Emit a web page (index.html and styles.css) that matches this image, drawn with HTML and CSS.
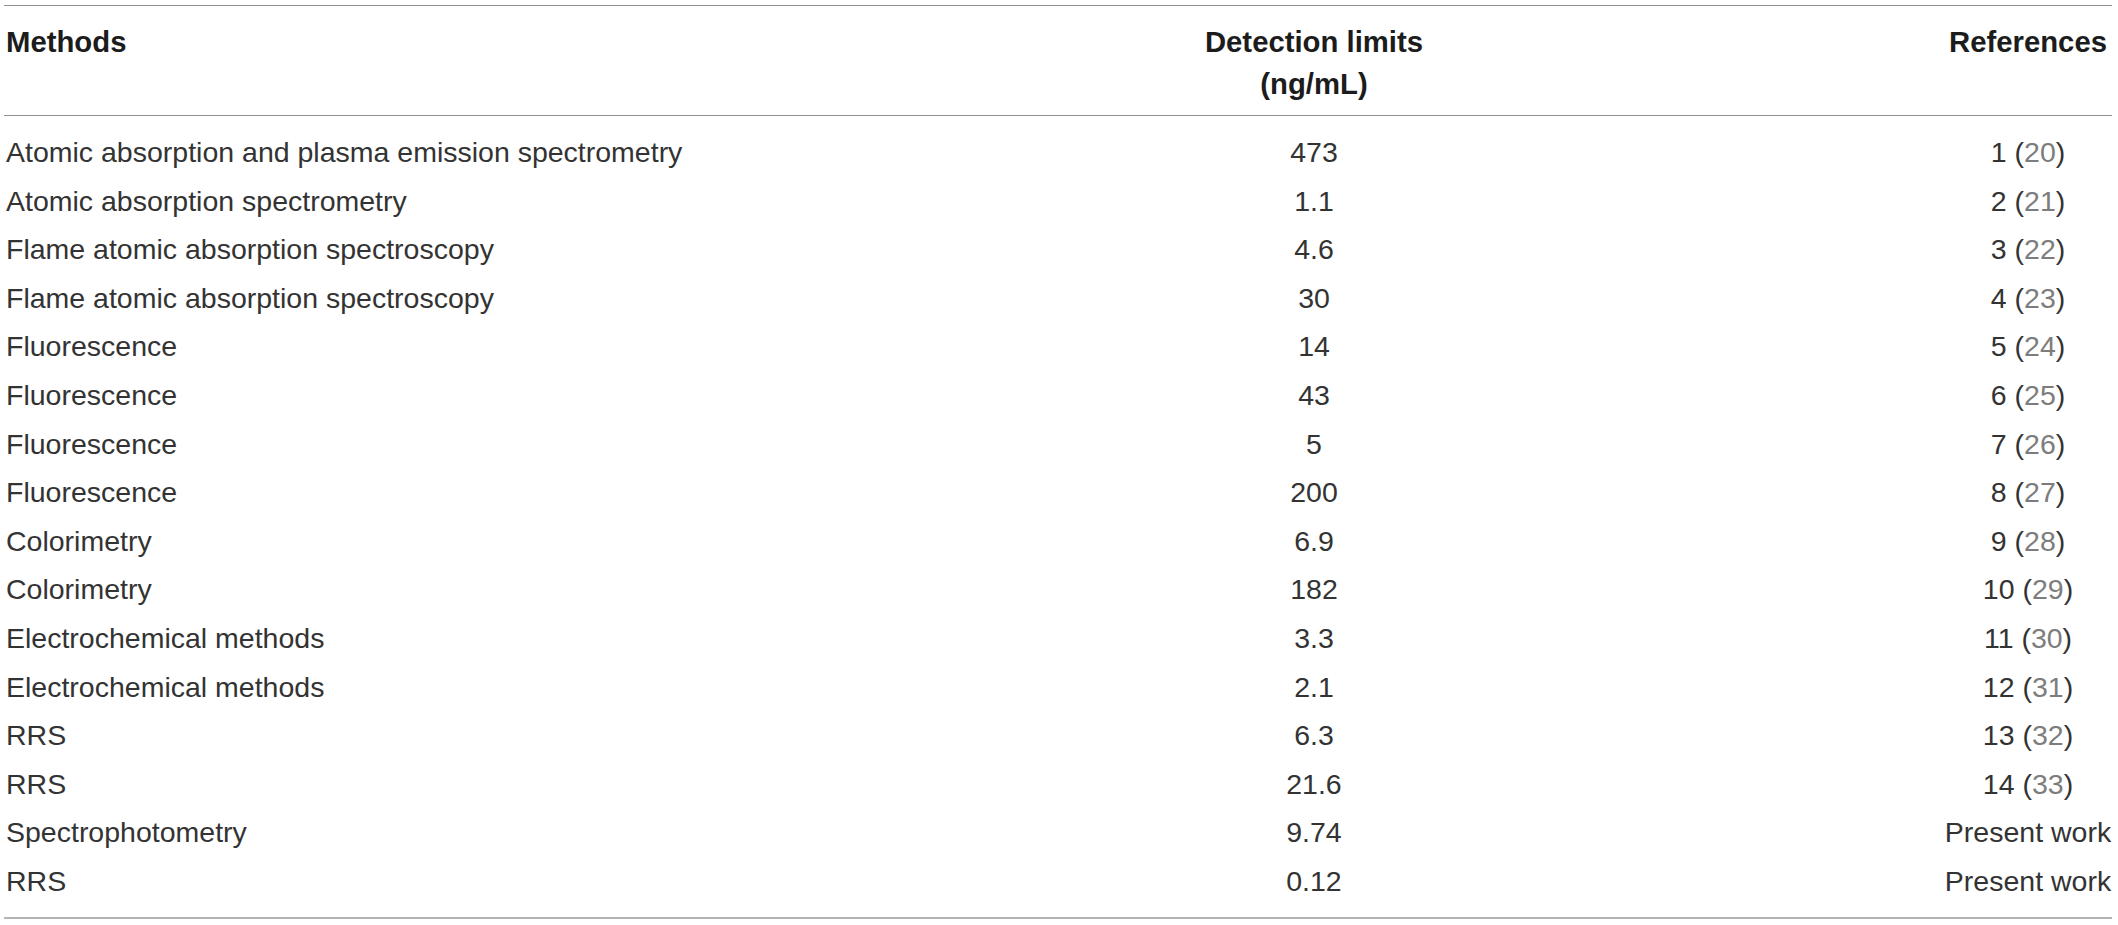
FILE: index.html
```html
<!DOCTYPE html>
<html>
<head>
<meta charset="utf-8">
<link rel="stylesheet" href="styles.css">
</head>
<body>
<table class="tbl">
  <colgroup>
    <col class="c-method">
    <col class="c-limit">
    <col class="c-ref">
  </colgroup>
  <thead>
    <tr>
      <th class="h-method">Methods</th>
      <th class="h-limit">Detection limits<br>(ng/mL)</th>
      <th class="h-ref">References</th>
    </tr>
  </thead>
  <tbody>
    <tr><td class="m">Atomic absorption and plasma emission spectrometry</td><td class="l">473</td><td class="r">1 (<span class="lnk">20</span>)</td></tr>
    <tr><td class="m">Atomic absorption spectrometry</td><td class="l">1.1</td><td class="r">2 (<span class="lnk">21</span>)</td></tr>
    <tr><td class="m">Flame atomic absorption spectroscopy</td><td class="l">4.6</td><td class="r">3 (<span class="lnk">22</span>)</td></tr>
    <tr><td class="m">Flame atomic absorption spectroscopy</td><td class="l">30</td><td class="r">4 (<span class="lnk">23</span>)</td></tr>
    <tr><td class="m">Fluorescence</td><td class="l">14</td><td class="r">5 (<span class="lnk">24</span>)</td></tr>
    <tr><td class="m">Fluorescence</td><td class="l">43</td><td class="r">6 (<span class="lnk">25</span>)</td></tr>
    <tr><td class="m">Fluorescence</td><td class="l">5</td><td class="r">7 (<span class="lnk">26</span>)</td></tr>
    <tr><td class="m">Fluorescence</td><td class="l">200</td><td class="r">8 (<span class="lnk">27</span>)</td></tr>
    <tr><td class="m">Colorimetry</td><td class="l">6.9</td><td class="r">9 (<span class="lnk">28</span>)</td></tr>
    <tr><td class="m">Colorimetry</td><td class="l">182</td><td class="r">10 (<span class="lnk">29</span>)</td></tr>
    <tr><td class="m">Electrochemical methods</td><td class="l">3.3</td><td class="r">11 (<span class="lnk">30</span>)</td></tr>
    <tr><td class="m">Electrochemical methods</td><td class="l">2.1</td><td class="r">12 (<span class="lnk">31</span>)</td></tr>
    <tr><td class="m">RRS</td><td class="l">6.3</td><td class="r">13 (<span class="lnk">32</span>)</td></tr>
    <tr><td class="m">RRS</td><td class="l">21.6</td><td class="r">14 (<span class="lnk">33</span>)</td></tr>
    <tr><td class="m">Spectrophotometry</td><td class="l">9.74</td><td class="r">Present work</td></tr>
    <tr><td class="m">RRS</td><td class="l">0.12</td><td class="r">Present work</td></tr>
  </tbody>
</table>
</body>
</html>
```
FILE: styles.css
```css
html, body {
  margin: 0;
  padding: 0;
  background: #ffffff;
}

body {
  padding: 5px 0 0 4px;
}

.tbl {
  width: 2108px;
  table-layout: fixed;
  border-collapse: collapse;
  font-family: "Liberation Sans", Arial, sans-serif;
  font-size: 28.5px;
  color: #333333;
  border-top: 1px solid #909090;
  border-bottom: 2px solid #b4b4b4;
}

.c-method { width: 996px; }
.c-limit { width: 628px; }
.c-ref { width: 484px; }

thead th {
  font-size: 29.3px;
  font-weight: 700;
  line-height: 42px;
  vertical-align: top;
  padding: 15px 0 10px 0;
  border-bottom: 1px solid #909090;
  color: #1c1c1c;
}

.h-method { text-align: left; padding-left: 2px; }
.h-limit { text-align: center; }
.h-ref { text-align: center; padding-left: 316px; }

tbody td {
  height: 48.6px;
  line-height: 48.6px;
  padding: 0;
  white-space: nowrap;
}

tbody tr:first-child td { padding-top: 12px; }
tbody tr:last-child td { padding-bottom: 11px; }

.m { text-align: left; padding-left: 2px; }
.l { text-align: center; }
.r { text-align: center; padding-left: 316px; }

.lnk { color: #7d7d7d; }
```
